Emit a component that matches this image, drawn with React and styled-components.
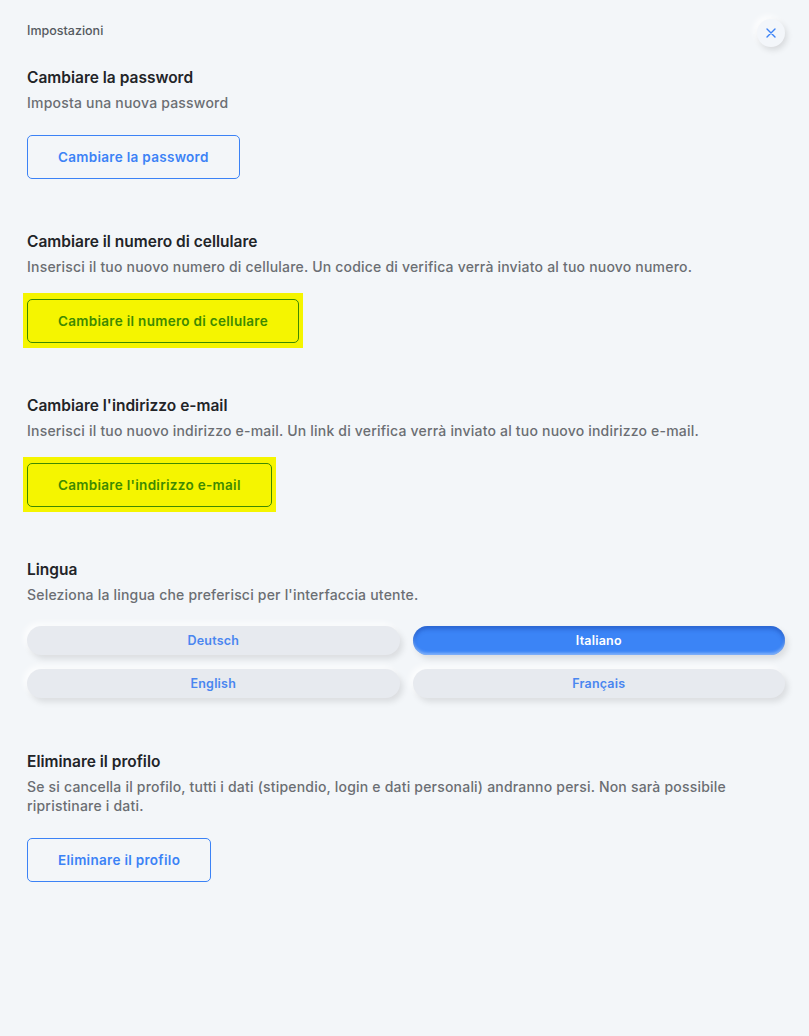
import React from "react";
import styled, { createGlobalStyle } from "styled-components";

const GlobalStyle = createGlobalStyle`
  html, body {
    margin: 0;
    padding: 0;
    background: #f3f6f9;
  }
  body {
    font-family: "Inter", "Liberation Sans", sans-serif;
    -webkit-font-smoothing: antialiased;
  }
`;

const Page = styled.div`
  box-sizing: border-box;
  width: 809px;
  min-height: 1036px;
  padding: 18px 24px 40px 27px;
  background: #f3f6f9;
`;

const TopBar = styled.div`
  display: flex;
  justify-content: space-between;
  align-items: center;
  height: 28px;
  margin-bottom: 21px;
`;

const PageLabel = styled.span`
  font-size: 12.5px;
  font-weight: 500;
  color: #555a60;
  margin-top: -3px;
`;

const CloseButton = styled.button`
  width: 28px;
  height: 28px;
  margin-top: 1px;
  border: none;
  border-radius: 50%;
  background: #f3f6fa;
  box-shadow: 2px 3px 6px rgba(0, 0, 0, 0.12), -3px -3px 6px rgba(255, 255, 255, 0.9);
  display: flex;
  align-items: center;
  justify-content: center;
  padding: 0;
  cursor: pointer;
`;

const Section = styled.section`
  margin-bottom: 47px;
`;

const Title = styled.h2`
  margin: 0;
  font-size: 15.5px;
  line-height: 22px;
  font-weight: 600;
  color: #222428;
`;

const Description = styled.p`
  margin: 4px 0 0;
  font-size: 14px;
  letter-spacing: 0.2px;
  line-height: 19px;
  font-weight: 500;
  color: #6b6e73;
`;

const Highlight = styled.div`
  display: flex;
  width: fit-content;
  margin: 17px 0 0 -4px;
  padding: 6px 4px 5px;
  background: ${(p) => (p.$on ? "#f5f500" : "transparent")};
`;

const OutlineButton = styled.button`
  display: block;
  box-sizing: border-box;
  height: 44px;
  padding: 0 30px;
  border-radius: 5px;
  border: 1px solid ${(p) => (p.$marked ? "#3e8a00" : "#3b82f6")};
  background: ${(p) => (p.$marked ? "#f5f500" : "transparent")};
  color: ${(p) => (p.$marked ? "#3e8a00" : "#3b82f6")};
  font-family: inherit;
  font-size: 13.5px;
  letter-spacing: 0.3px;
  font-weight: 600;
  cursor: pointer;
`;

const LangGrid = styled.div`
  display: grid;
  grid-template-columns: 1fr 1fr;
  column-gap: 13px;
  row-gap: 14px;
  margin-top: 22px;
  padding-bottom: 6px;
`;

const LangPill = styled.button`
  height: 29px;
  border: none;
  border-radius: 15px;
  font-family: inherit;
  font-size: 12.5px;
  letter-spacing: 0.2px;
  font-weight: 600;
  cursor: pointer;
  color: ${(p) => (p.$active ? "#ffffff" : "#4a86f0")};
  background: ${(p) => (p.$active ? "#3b84f6" : "#e7eaef")};
  box-shadow: ${(p) =>
    p.$active
      ? "inset 0 3px 4px rgba(20, 60, 160, 0.45), inset 0 -2px 3px rgba(170, 205, 255, 0.7), 3px 4px 6px rgba(0, 0, 0, 0.1)"
      : "3px 4px 6px rgba(0, 0, 0, 0.1), -3px -3px 6px rgba(255, 255, 255, 0.8)"};
`;

const sections = [
  {
    title: "Cambiare la password",
    text: "Imposta una nuova password",
    button: "Cambiare la password",
  },
  {
    title: "Cambiare il numero di cellulare",
    text: "Inserisci il tuo nuovo numero di cellulare. Un codice di verifica verrà inviato al tuo nuovo numero.",
    button: "Cambiare il numero di cellulare",
    marked: true,
  },
  {
    title: "Cambiare l'indirizzo e-mail",
    text: "Inserisci il tuo nuovo indirizzo e-mail. Un link di verifica verrà inviato al tuo nuovo indirizzo e-mail.",
    button: "Cambiare l'indirizzo e-mail",
    marked: true,
  },
];

const languages = [
  { label: "Deutsch" },
  { label: "Italiano", active: true },
  { label: "English" },
  { label: "Français" },
];

export default function App() {
  return (
    <>
      <GlobalStyle />
      <Page>
        <TopBar>
          <PageLabel>Impostazioni</PageLabel>
          <CloseButton aria-label="Chiudi">
            <svg width="10" height="10" viewBox="0 0 10 10">
              <path d="M1 1L9 9M9 1L1 9" stroke="#3b82f6" strokeWidth="1.4" strokeLinecap="round" />
            </svg>
          </CloseButton>
        </TopBar>

        {sections.map((s) => (
          <Section key={s.title}>
            <Title>{s.title}</Title>
            <Description>{s.text}</Description>
            <Highlight $on={s.marked}>
              <OutlineButton $marked={s.marked}>{s.button}</OutlineButton>
            </Highlight>
          </Section>
        ))}

        <Section>
          <Title>Lingua</Title>
          <Description>Seleziona la lingua che preferisci per l'interfaccia utente.</Description>
          <LangGrid>
            {languages.map((l) => (
              <LangPill key={l.label} $active={l.active}>
                {l.label}
              </LangPill>
            ))}
          </LangGrid>
        </Section>

        <Section>
          <Title>Eliminare il profilo</Title>
          <Description>
            Se si cancella il profilo, tutti i dati (stipendio, login e dati personali) andranno persi. Non sarà possibile
            ripristinare i dati.
          </Description>
          <Highlight>
            <OutlineButton>Eliminare il profilo</OutlineButton>
          </Highlight>
        </Section>
      </Page>
    </>
  );
}
